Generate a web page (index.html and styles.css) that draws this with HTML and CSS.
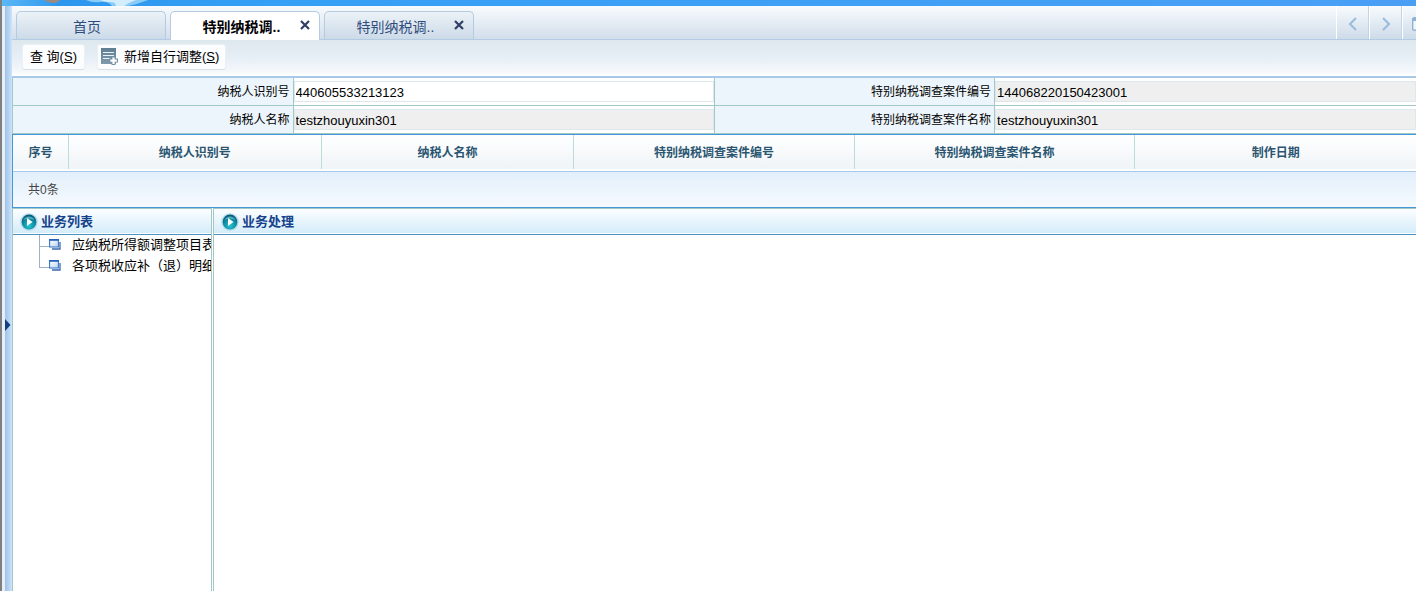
FILE: index.html
```html
<!DOCTYPE html>
<html lang="zh-CN">
<head>
<meta charset="utf-8">
<title>特别纳税调整</title>
<link rel="stylesheet" href="styles.css">
</head>
<body>
<svg class="defs" width="0" height="0" aria-hidden="true">
  <defs>
    <radialGradient id="orb" cx="50%" cy="75%" r="70%"><stop offset="0" stop-color="#27c3d2"/><stop offset="0.6" stop-color="#0d8ba3"/><stop offset="1" stop-color="#075c78"/></radialGradient>
    <linearGradient id="leaf" x1="0" y1="0" x2="1" y2="1"><stop offset="0" stop-color="#fff"/><stop offset="1" stop-color="#b9d6f2"/></linearGradient>
    <linearGradient id="doc" x1="0" y1="0" x2="0" y2="1"><stop offset="0" stop-color="#5f7d93"/><stop offset="1" stop-color="#7f9bae"/></linearGradient>
    <linearGradient id="sky" x1="0" y1="0" x2="1" y2="0"><stop offset="0" stop-color="#5cb8f5"/><stop offset="1" stop-color="#5cb8f5" stop-opacity="0"/></linearGradient>
    <symbol id="i-orb" viewBox="0 0 18 18"><circle cx="9" cy="9" r="8.8" fill="#b8dbea"/><circle cx="9" cy="9" r="7.4" fill="url(#orb)"/><path d="M3.5 7a6 6 0 0 1 11 0Q9 4.500 3.500 7Z" fill="#7ccfdb" opacity=".6"/><path d="M7 5L12.500 9 7 13Z" fill="#fff"/></symbol>
    <symbol id="i-leaf" viewBox="0 0 12 11"><path d="M3 10h8V3" fill="none" stroke="#3a68b4" stroke-width="1.300"/><rect x=".6" y="1" width="8.800" height="7" fill="url(#leaf)" stroke="#3f77c5" stroke-width="1.100"/><path d="M0 .8h10" stroke="#2862c0" stroke-width="1.600"/></symbol>
    <symbol id="i-x" viewBox="0 0 10 10"><path d="M1 1l8 8M9 1l-8 8" stroke="#303f63" stroke-width="2.200" fill="none"/></symbol>
  </defs>
</svg>
<div class="app">
  <header class="banner">
    <svg width="180" height="6" viewBox="0 0 180 6" aria-hidden="true">
      <path d="M0 0h60l-8 6H0Z" fill="url(#sky)"/>
      <path d="M84 0Q90 3 98 2T110 6h16Q136 4 146 0Z" fill="#8accf8"/>
      <path d="M98 0q4 2 10 2t6 4h8q4-3 12-6Z" fill="#d3edfc"/>
      <path d="M42 0h16q-2 3-7 3t-9-3Z" fill="#9a8a82"/>
    </svg>
  </header>
  <div class="shell">
    <aside class="rail"><button class="expand" type="button" aria-label="展开"><svg width="6" height="14" viewBox="0 0 6 14"><path d="M0 1l5.500 6L0 13Z" fill="#123f80"/></svg></button></aside>
    <main class="main">
      <nav class="tabs">
        <div class="tab"><a class="tab-label" href="#">首页</a></div>
        <div class="tab tab-active"><a class="tab-label" href="#">特别纳税调..</a><button class="close" type="button" aria-label="关闭"><svg width="10" height="10"><use href="#i-x"/></svg></button></div>
        <div class="tab"><a class="tab-label" href="#">特别纳税调..</a><button class="close" type="button" aria-label="关闭"><svg width="10" height="10"><use href="#i-x"/></svg></button></div>
        <div class="pager">
          <button type="button" aria-label="向左"><svg width="10" height="14" viewBox="0 0 10 14"><path d="M8 1L2 7l6 6" fill="none" stroke="#99bbdc" stroke-width="2"/></svg></button>
          <button type="button" aria-label="向右"><svg width="10" height="14" viewBox="0 0 10 14"><path d="M2 1l6 6-6 6" fill="none" stroke="#99bbdc" stroke-width="2"/></svg></button>
          <button class="windows" type="button" aria-label="窗口"><svg width="14" height="14" viewBox="0 0 14 14"><rect x=".7" y=".7" width="12.600" height="12.600" rx="1.500" fill="#f2f7fb" stroke="#8fb2d6" stroke-width="1.400"/><path d="M0 1h14v3H0Z" fill="#8fb2d6"/></svg></button>
        </div>
      </nav>
      <div class="toolbar">
        <button class="tool" type="button"><span>查 询(<u>S</u>)</span></button>
        <button class="tool tool-icon" type="button"><svg width="17" height="17" viewBox="0 0 17 17" aria-hidden="true"><rect width="15" height="16" fill="url(#doc)"/><path d="M2 4.500h11M2 7.500h11M2 10.500h7" stroke="#e8f0f5" stroke-width="1.200"/><path d="M10.500 8.500h4v2h2.500v4h-2.500V17h-4v-2.500H8v-4h2.500Z" fill="#7390a4"/><path d="M12.500 9.500v6.500M9.300 12.700h6.500" stroke="#fff" stroke-width="2.200"/></svg><span>新增自行调整(<u>S</u>)</span></button>
      </div>
      <form class="form">
        <label for="f1">纳税人识别号</label><div class="field"><input id="f1" type="text" value="440605533213123"></div>
        <label for="f2">特别纳税调查案件编号</label><div class="field"><input id="f2" type="text" value="144068220150423001" readonly></div>
        <label for="f3">纳税人名称</label><div class="field"><input id="f3" type="text" value="testzhouyuxin301" readonly></div>
        <label for="f4">特别纳税调查案件名称</label><div class="field"><input id="f4" type="text" value="testzhouyuxin301" readonly></div>
      </form>
      <section class="grid">
        <table>
          <colgroup><col class="c-no"><col class="c-id"><col class="c-id"><col class="c-case"><col class="c-case"><col class="c-case"></colgroup>
          <thead><tr><th>序号</th><th>纳税人识别号</th><th>纳税人名称</th><th>特别纳税调查案件编号</th><th>特别纳税调查案件名称</th><th>制作日期</th></tr></thead>
        </table>
        <div class="count">共0条</div>
      </section>
      <div class="panels">
        <section class="panel panel-list">
          <h2><svg width="18" height="18"><use href="#i-orb"/></svg>业务列表</h2>
          <ul class="tree">
            <li><a href="#"><svg width="12" height="11"><use href="#i-leaf"/></svg>应纳税所得额调整项目表</a></li>
            <li><a href="#"><svg width="12" height="11"><use href="#i-leaf"/></svg>各项税收应补（退）明细</a></li>
          </ul>
        </section>
        <section class="panel panel-work">
          <h2><svg width="18" height="18"><use href="#i-orb"/></svg>业务处理</h2>
        </section>
      </div>
    </main>
  </div>
</div>
</body>
</html>
```
FILE: styles.css
```css
* { box-sizing: border-box; }
html, body { height: 100%; }
body { margin: 0; overflow: hidden; background: #fff; color: #000; font: 13px/20px "Liberation Sans", "Noto Sans CJK SC", sans-serif; }
a { color: inherit; text-decoration: none; }
button { margin: 0; padding: 0; border: 0; background: none; font: inherit; color: inherit; }
svg { flex: none; display: block; }
.defs { position: absolute; }
.app { display: flex; flex-direction: column; height: 100%; border-left: 2px solid #808080; }
.banner { height: 6px; background: linear-gradient(90deg, #2a94ec, #35a0f5 20%, #4a9ff5); }
.shell { flex: 1; display: flex; min-height: 0; }
.rail { width: 10px; display: flex; align-items: center; padding-left: 3px; background: linear-gradient(90deg, #e6eef8 0 3px, #9fc3e8 3px, #bcd8f4 8px, #d4e6f8); }
.expand { margin-top: 52px; }
.main { flex: 1; min-width: 0; display: flex; flex-direction: column; }
.tabs { display: flex; align-items: flex-end; gap: 4px; height: 34px; padding-left: 4px; border-bottom: 1px solid #b4cbe6; background: linear-gradient(#f8fbfd, #d2deeb); }
.tab { display: flex; align-items: center; width: 150px; height: 28px; padding: 2px 9px 0 26px; border: 1px solid #b4cbe2; border-bottom: 0; border-radius: 5px 5px 0 0; background: linear-gradient(#ecf2f7, #ccdae8); color: #2f4d7c; font-size: 14px; }
.tab:first-child { padding: 2px 8px 0 0; }
.tab-label { flex: 1; text-align: center; white-space: nowrap; }
.tab-active { margin-bottom: -1px; height: 29px; background: #fff; color: #000; font-weight: bold; }
.close { margin: 0 0 4px 14px; }
.pager { display: flex; align-self: stretch; margin-left: auto; margin-right: -20px; }
.pager button { display: flex; align-items: center; justify-content: center; width: 33px; padding-top: 2px; border-left: 1px solid #fff; border-right: 1px solid #c3d3e3; background: linear-gradient(#f8fbfd, #cddbe9); }
.pager .windows { width: 34px; }
.toolbar { display: flex; align-items: center; gap: 12px; height: 38px; padding: 0 10px 3px; border-bottom: 2px solid #a8cae8; background: linear-gradient(#dde8ee, #e6eef6 50%, #f6f9fb 90%, #fff); }
.tool { display: flex; align-items: center; gap: 6px; height: 26px; padding: 0 7px; border: 1px solid #eaf0f4; border-bottom-color: #d8dfe5; border-radius: 3px; background: #fcfdfe; white-space: pre; }
.tool-icon { padding: 0 6px 0 3px; }
.form { display: grid; grid-template-columns: 2fr 3fr 2fr 3fr; border-left: 1px solid #a3c9c7; }
.form label { height: 28px; padding: 1px 3px 0 0; border-right: 1px solid #a3c9c7; border-bottom: 1px solid #a3c9c7; background: #edf5fc; font-size: 12px; line-height: 27px; text-align: right; }
.field { height: 28px; padding: 3px 0; border-right: 1px solid #a3c9c7; border-bottom: 1px solid #a3c9c7; }
.field:nth-child(4n) { border-right: 0; }
.field input { display: block; width: 100%; height: 21px; padding: 1px 0 0 1px; border: 1px solid #dce8ec; border-radius: 0; outline: 0; background: #fff; color: #000; font: inherit; }
.field input:read-only { background: #efefef; }
.grid { border: 1px solid #4398d6; border-right: 0; }
.grid table { width: 100%; table-layout: fixed; border-collapse: separate; border-spacing: 0; border-bottom: 2px solid #fff; }
.c-no { width: 4%; }
.c-id { width: 18%; }
.c-case { width: 20%; }
.grid th { height: 34px; padding: 2px 0 0; border-right: 1px solid #bcdcd9; background: linear-gradient(#fff, #f0f4f7); color: #2a5570; font-size: 12px; line-height: 16px; }
.grid th:last-child { border-right: 0; }
.count { height: 36px; padding-left: 15px; border-top: 1px solid #a8cae8; background: linear-gradient(#e2effa, #f6faff); color: #444; font-size: 12px; line-height: 37px; }
.panels { flex: 1; display: flex; gap: 1px; min-height: 0; border-left: 1px solid #a3c9c7; }
.panel { border-top: 1px solid #a3c9c7; overflow: hidden; }
.panel-list { width: 199px; border-right: 1px solid #a3c9c7; }
.panel-work { flex: 1; border-left: 1px solid #a3c9c7; }
.panel h2 { display: flex; align-items: center; gap: 3px; height: 26px; margin: 0; padding-left: 7px; border-bottom: 1px solid #4c92c3; background: linear-gradient(#fcfeff, #d5ecfa 94%, #fff 96%); color: #15428b; font-size: 13px; }
.tree { margin: 0; padding: 0 0 0 26px; list-style: none; }
.tree li { height: 21px; border-left: 1px solid #9fb0c8; }
.tree li:last-child { height: 14px; }
.tree li:last-child { border-left: 0; background: linear-gradient(#9fb0c8, #9fb0c8) 0 0 / 1px 12px no-repeat; padding-left: 1px; }
.tree a { display: flex; align-items: center; height: 19px; white-space: nowrap; }
.tree a::before { content: ""; flex: none; width: 9px; height: 4px; border-bottom: 1px solid #9fb0c8; }
.tree svg { margin-right: 11px; }
```
